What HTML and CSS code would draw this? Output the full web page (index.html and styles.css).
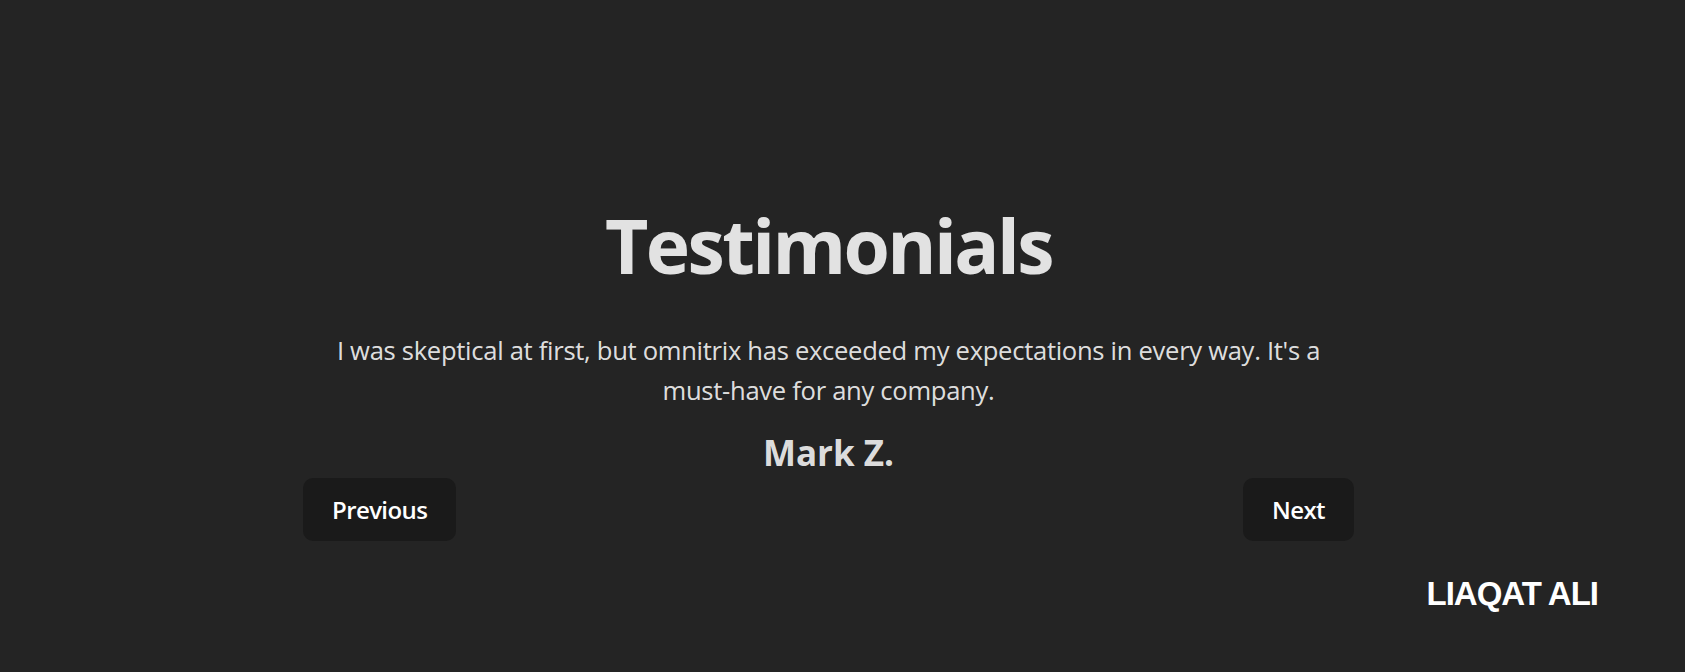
FILE: index.html
```html
<!DOCTYPE html>
<html lang="en">
<head>
<meta charset="utf-8">
<title>Testimonials</title>
<link rel="stylesheet" href="styles.css">
</head>
<body>
<main class="page">
  <section class="testimonials">
    <h1 class="title">Testimonials</h1>
    <p class="quote">I was skeptical at first, but omnitrix has exceeded my expectations in every way. It's a must-have for any company.</p>
    <h3 class="author">Mark Z.</h3>
    <div class="controls">
      <button class="btn">Previous</button>
      <button class="btn">Next</button>
    </div>
  </section>
  <footer class="signature">LIAQAT ALI</footer>
</main>
</body>
</html>
```
FILE: styles.css
```css
html, body {
  margin: 0;
  padding: 0;
}
body {
  background: #242424;
  color: rgba(255, 255, 255, 0.87);
  font-family: "Open Sans", "Noto Sans", sans-serif;
  height: 672px;
  overflow: hidden;
}
.page {
  display: flex;
  flex-direction: column;
  padding-top: 203px;
}
.testimonials {
  width: 1051px;
  margin-left: 303px;
  display: flex;
  flex-direction: column;
  align-items: center;
  text-align: center;
}
.title {
  margin: 0;
  font-size: 75px;
  line-height: 84px;
  font-weight: 700;
  letter-spacing: -2.6px;
}
.quote {
  margin: 44px 0 0;
  max-width: 1000px;
  font-size: 25.6px;
  line-height: 40px;
  font-weight: 400;
  letter-spacing: -0.3px;
}
.author {
  margin: 20px 0 0;
  font-size: 35px;
  line-height: 44px;
  font-weight: 700;
}
.controls {
  align-self: stretch;
  display: flex;
  justify-content: space-between;
  margin-top: 3px;
}
.btn {
  font-family: inherit;
  font-size: 24px;
  font-weight: 600;
  line-height: 30px;
  padding: 17px 29px 16px;
  border: 0;
  border-radius: 10px;
  background: #1a1a1a;
  color: #ffffff;
  letter-spacing: -0.6px;
  cursor: pointer;
}
.signature {
  align-self: flex-end;
  margin: 33px 87px 0 0;
  font-family: "Liberation Sans", Arial, sans-serif;
  font-weight: 700;
  font-size: 33px;
  line-height: 40px;
  letter-spacing: -1px;
  color: #ffffff;
}
```
